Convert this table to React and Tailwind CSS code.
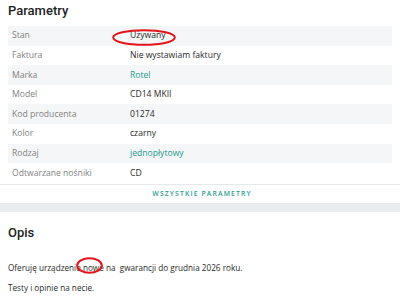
import React from 'react';

const params = [
    { label: 'Stan', value: 'Używany' },
    { label: 'Faktura', value: 'Nie wystawiam faktury' },
    { label: 'Marka', value: 'Rotel', link: true },
    { label: 'Model', value: 'CD14 MKII' },
    { label: 'Kod producenta', value: '01274' },
    { label: 'Kolor', value: 'czarny' },
    { label: 'Rodzaj', value: 'jednopłytowy', link: true },
    { label: 'Odtwarzane nośniki', value: 'CD' },
];

// czerwona obwódka jak w zrzucie
const Ring = ({ className, w, h }) => (
    <svg className={`absolute pointer-events-none ${className}`} width={w} height={h} viewBox={`0 0 ${w} ${h}`}>
        <ellipse cx={w / 2} cy={h / 2} rx={w / 2 - 1.2} ry={h / 2 - 1.2} fill="none" stroke="#e3141c" strokeWidth="2" />
    </svg>
);

const App = () => {
    return (
        <div className="w-[400px] h-[301px] overflow-hidden bg-[#e9ecef] font-['Open_Sans',sans-serif] text-[#222]">
            <div className="bg-white h-[203px] px-2">
                <h2 className="h-[26px] flex items-center pb-[4px] font-['Roboto',sans-serif] text-[13px] font-medium text-[#222]">Parametry</h2>
                <div className="relative">
                    {params.map((p, i) => (
                        <div
                            key={p.label}
                            className={`flex items-center h-[19.6px] text-[8.6px] ${i % 2 === 0 ? 'bg-[#f5f6f7]' : ''}`}
                        >
                            <span className="w-[122px] pl-1 text-[#828282]">{p.label}</span>
                            <span className={p.link ? 'text-[#1a9a8c]' : 'text-[#2a2a2a]'}>{p.value}</span>
                        </div>
                    ))}
                    <Ring className="left-[104px] top-[3px]" w={64} h={17} />
                </div>
                <div className="-mx-2 mt-[1px] border-t border-[#e6e8ea] h-[19px] flex items-center justify-center">
                    <span className="text-[6.8px] font-semibold tracking-[0.17em] text-[#2a9d92] pt-[1px] pl-[4px]">WSZYSTKIE PARAMETRY</span>
                </div>
            </div>
            <div className="mt-[9px] bg-white h-[89px] px-2">
                <h2 className="pt-[9px] font-['Roboto',sans-serif] text-[13px] font-medium leading-[24px]">Opis</h2>
                <div className="relative mt-[13px] text-[8.2px] leading-[20px] text-[#2a2a2a]">
                    <p>Oferuję urządzenie nowe na&nbsp; gwarancji do grudnia 2026 roku.</p>
                    <p>Testy i opinie na necie.</p>
                    <Ring className="left-[68px] top-[-1px]" w={27} h={17} />
                </div>
            </div>
        </div>
    );
};

export default App;
